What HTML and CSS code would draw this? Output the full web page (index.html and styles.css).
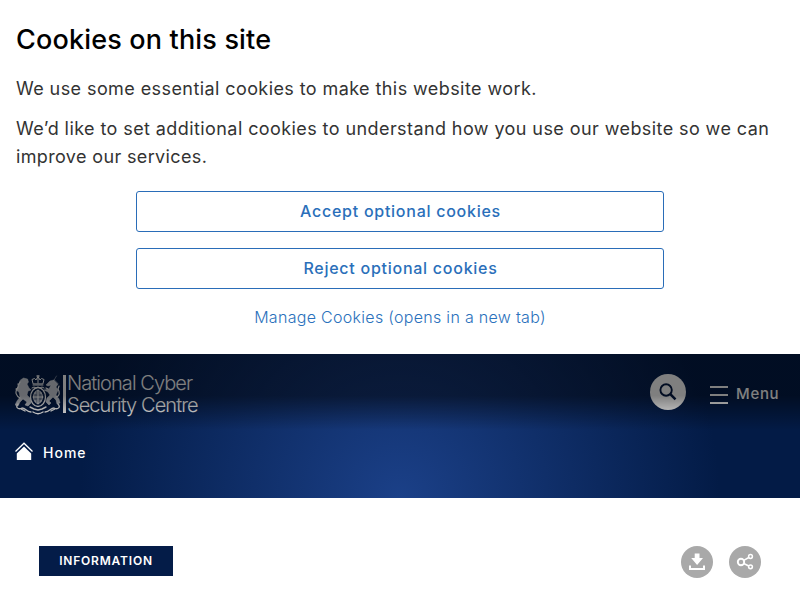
FILE: index.html
```html
<!DOCTYPE html>
<html lang="en">
<head>
<meta charset="utf-8">
<title>National Cyber Security Centre</title>
<link rel="stylesheet" href="styles.css">
</head>
<body>
<section class="cookies">
  <h2><span>Cookies on this site</span></h2>
  <p class="intro"><span>We use some essential cookies to make this website work.</span></p>
  <p class="detail"><span class="l1">We’d like to set additional cookies to understand how you use our website so we can</span><br><span class="l2">improve our services.</span></p>
  <div class="actions">
    <button class="accept"><span>Accept optional cookies</span></button>
    <button class="reject"><span>Reject optional cookies</span></button>
    <a class="manage"><span>Manage Cookies (opens in a new tab)</span></a>
  </div>
</section>
<header class="hero">
  <div class="bar">
    <div class="logo">
      <svg class="crest" width="46" height="40" viewBox="0 0 46 40" fill="none" stroke="#fff" stroke-linecap="round" stroke-linejoin="round">
        <path d="M18 8.500l-1-4 2.500-1 1.500 1.500 2-3.500 2 3.500 1.500-1.500 2.500 1-1 4z" stroke-width="1"/>
        <path d="M23 0v8M21.700 1h2.600M18 10h10" stroke-width="1"/>
        <ellipse cx="23" cy="22" rx="7.500" ry="9.500" stroke-width="1.300"/>
        <ellipse cx="23" cy="22" rx="4.500" ry="6.500" fill="#fff" fill-opacity=".45" stroke-width=".8"/>
        <path d="M23 15v14M18 22h10M20 18h1M25 18h1M20 26h1M25 26h1M17 13l2-1 2 1 2-1 2 1 2-1 2 1" stroke-width="1"/>
        <path d="M5.500 5l3-2 4 1 1 3-1.500 2 2 4 2 2-3 1-1 4 3 3 1 5-3 3-3-1 2-3-4-3-3 3-2 4-3-1 2-4 3-4-1-5-3-2 2-3z" fill="#fff" fill-opacity=".8" stroke-width=".4"/>
        <path d="M5 23c-4-2-5-6-3-9 1-2 2-3 1-5M3 13l-2 1M5 7l-1 2" stroke-width="1.200"/>
        <path d="M38.500 6l3-5M39 5l-4 1-4 4 2 1 3-1-2 4-5 1 4 2 2 3-3 3-1 4 3 3 2-2-2-2 4-4 3 3 1 4 3-1-1-4-3-4 2-5-2-3 2-3z" fill="#fff" fill-opacity=".8" stroke-width=".4"/>
        <path d="M41 22c4-1 4-5 2-8l1-3M33 14l-2-1" stroke-width="1.200"/>
        <path d="M3 29c-3 3 0 6 4 4 4 0 4 4 9 4M43 29c3 3 0 6-4 4-4 0-4 4-9 4M6 34l4 2M40 34l-4 2" stroke-width="1.300"/>
        <path d="M15 32l4 2 4 1 4-1 4-2M18 37c3 2 7 2 10 0" stroke-width="1.400"/>
      </svg>
      <i class="rule"></i>
      <div class="wordmark"><span class="w1">National Cyber</span><span class="w2">Security Centre</span></div>
    </div>
    <div class="tools">
      <button class="search" aria-label="Search">
        <svg width="36" height="36" viewBox="0 0 36 36" fill="none" stroke="#041a45"><circle cx="16.100" cy="16" r="5.700" stroke-width="1.900"/><path d="M20.300 20.200l5.200 5.200" stroke-width="2.500"/></svg>
      </button>
      <span class="burger"><i></i><i></i><i></i></span>
      <span class="menu">Menu</span>
    </div>
  </div>
  <nav class="crumbs">
    <svg width="18" height="18" viewBox="0 0 18 18"><path d="M.5 9.500L9 1.200l8.500 8.300" fill="none" stroke="#fff" stroke-width="1.300"/><path d="M1.800 11.500L9 4.400l7.200 7.100V18H1.800z" fill="#fff"/></svg>
    <a>Home</a>
  </nav>
  <div class="shade"></div>
</header>
<main class="content">
  <span class="tag">INFORMATION</span>
  <div class="share">
    <svg width="32" height="32" viewBox="0 0 32 32"><circle cx="16" cy="16" r="16" fill="#a9a9a9"/><path d="M13.700 7.500h4.800V12H22l-5.900 7-5.900-7h3.500z" fill="#fff"/><path d="M9 19.500V23h14v-3.500" fill="none" stroke="#fff" stroke-width="2"/></svg>
    <svg width="32" height="32" viewBox="0 0 32 32" fill="none" stroke="#fff"><circle cx="16" cy="16" r="16" fill="#a9a9a9" stroke="none"/><circle cx="12" cy="16" r="3.200" stroke-width="1.900"/><circle cx="21.500" cy="10.500" r="1.900" stroke-width="1.500"/><circle cx="21.500" cy="20.800" r="1.900" stroke-width="1.500"/><path d="M14.800 14.400l5-2.900M14.800 17.500l5 2.500" stroke-width="1.500"/></svg>
  </div>
</main>
</body>
</html>
```
FILE: styles.css
```css
* { box-sizing: border-box; }
body { margin: 0; background: #fff; font-family: Inter, "Open Sans", sans-serif; color: #333; overflow: hidden; }
button { background: none; padding: 0; font-family: inherit; }
.cookies { height: 354px; padding: 20px 16px 0; white-space: nowrap; }
.cookies h2 { margin: 0; font-size: 27px; font-weight: 500; line-height: 40px; color: #000; letter-spacing: 0.17px; }
.cookies p { margin: 0; font-size: 18px; line-height: 28px; letter-spacing: 0.415px; }
.cookies .l2 { letter-spacing: 0.36px; }
.cookies .intro { margin: 15px 0 12px; }
.actions { display: flex; flex-direction: column; align-items: center; width: 528px; margin: 20px auto 0; color: #2a71bc; }
.actions button { width: 100%; height: 41px; margin-bottom: 16px; border: 1px solid #2a6db8; border-radius: 3px; color: #2a6fba; font-size: 16px; font-weight: 500; line-height: 39px; letter-spacing: 0.74px; text-indent: 1px; }
.manage { font-size: 16px; line-height: 24px; font-weight: 300; letter-spacing: 0.3px; }
.hero { position: relative; height: 144px; background: radial-gradient(circle 320px at 50% 100%, #1b4088 0%, #031b46 100%); color: #fff; }
.bar { display: flex; justify-content: space-between; height: 72px; padding: 20px 22px 0 15px; }
.logo { display: flex; align-items: flex-start; padding-top: 1px; }
.rule { width: 3px; height: 38px; margin-left: 2px; background: #fff; }
.wordmark { display: flex; flex-direction: column; margin: -3px 0 0 1px; font-size: 20px; font-weight: 300; line-height: 22px; letter-spacing: -0.93px; white-space: nowrap; }
.tools { display: flex; align-items: flex-start; }
.search { width: 36px; height: 36px; border: 0; border-radius: 50%; background: #fff; }
.search svg { display: block; }
.burger { display: flex; flex-direction: column; gap: 6px; width: 18px; margin: 12px 8px 0 24px; }
.burger i { height: 2px; background: #fff; }
.menu { width: 42px; font-size: 15px; font-weight: 500; line-height: 39px; letter-spacing: 0.7px; white-space: nowrap; }
.crumbs { display: flex; align-items: flex-start; gap: 10px; padding: 16px 15px 0; font-size: 14px; font-weight: 500; line-height: 22px; letter-spacing: 1px; }
.shade { position: absolute; inset: 0 0 auto; height: 76px; background: linear-gradient(rgba(0,0,0,.5) 0, rgba(0,0,0,.5) 55%, rgba(0,0,0,0) 100%); }
.content { display: flex; justify-content: space-between; height: 102px; padding: 48px 39px 0; }
.tag { width: 134px; height: 30px; background: #041c48; color: #fff; font-size: 12px; font-weight: 600; line-height: 30px; text-align: center; letter-spacing: 0.8px; }
.share { display: flex; gap: 16px; }
```
